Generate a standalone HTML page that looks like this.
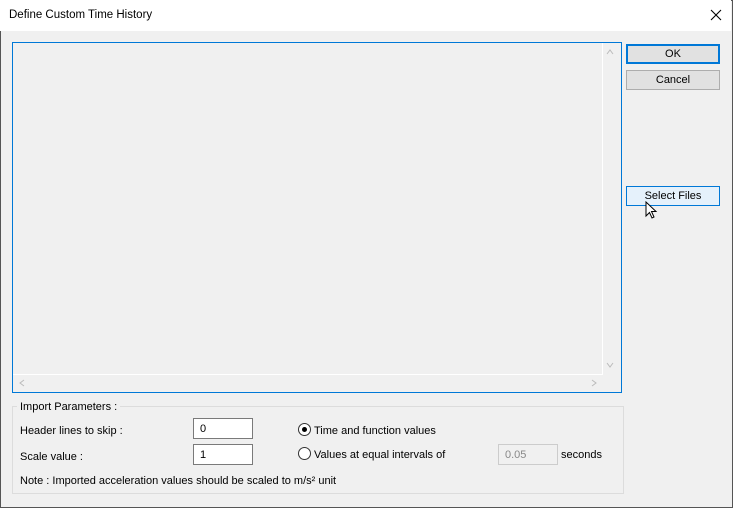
<!DOCTYPE html>
<html><head><style>
*{margin:0;padding:0;box-sizing:border-box}
body{width:733px;height:508px;background:#f0f0f0;font-family:"Liberation Sans",sans-serif;font-size:11px;color:#000;position:relative;overflow:hidden}
.win{position:absolute;left:0;top:0;width:733px;height:508px;border:1px solid #555;}
.title{position:absolute;left:0;top:0;width:731px;height:31px;background:#fff}
.a{position:absolute;white-space:nowrap}
.btn{position:absolute;left:626px;width:94px;height:20px;background:#e1e1e1;border:1px solid #adadad;text-align:center;line-height:19px}
.inp{position:absolute;width:60px;height:21px;background:#fff;border:1px solid #7a7a7a;padding-left:6px;line-height:20px}
.radio{position:absolute;width:13px;height:13px;border:1px solid #333;border-radius:50%;background:#fff}
</style></head><body>
<div class="win"></div>
<div class="title"></div>
<div class="a" style="left:9px;top:9px;font-size:11.5px">Define Custom Time History</div>
<svg class="a" style="left:710px;top:9px" width="12" height="12"><path d="M1 1L11 11M11 1L1 11" stroke="#000" stroke-width="1.1"/></svg>
<div class="a" style="left:12px;top:42px;width:610px;height:351px;border:1px solid #0078d7"></div>
<div class="a" style="left:602px;top:43px;width:1px;height:332px;background:#fff"></div>
<div class="a" style="left:13px;top:374px;width:590px;height:1px;background:#fff"></div>
<svg class="a" style="left:606px;top:49px" width="8" height="6"><path d="M1 5L4 1L7 5" stroke="#bbb" fill="none"/></svg>
<svg class="a" style="left:606px;top:362px" width="8" height="6"><path d="M1 1L4 5L7 1" stroke="#bbb" fill="none"/></svg>
<svg class="a" style="left:19px;top:379px" width="6" height="8"><path d="M5 1L1 4L5 7" stroke="#bbb" fill="none"/></svg>
<svg class="a" style="left:591px;top:379px" width="6" height="8"><path d="M1 1L5 4L1 7" stroke="#bbb" fill="none"/></svg>
<div class="btn" style="top:44px;border:2px solid #0078d7;line-height:17px">OK</div>
<div class="btn" style="top:70px">Cancel</div>
<div class="btn" style="top:186px;background:#e5f1fb;border-color:#0078d7">Select Files</div>
<svg class="a" style="left:645px;top:201px" width="14" height="20"><path d="M1 1L1 15L4.5 11.5L7 17L9 16L6.5 10.5L11 10.5Z" fill="#fff" stroke="#000" stroke-width="1"/></svg>
<div class="a" style="left:12px;top:406px;width:612px;height:88px;border:1px solid #dcdcdc"></div>
<div class="a" style="left:17px;top:401px;background:#f0f0f0;padding:0 3px">Import Parameters :</div>
<div class="a" style="left:20px;top:425px">Header lines to skip :</div>
<div class="a" style="left:20px;top:451px">Scale value :</div>
<div class="inp" style="left:193px;top:418px">0</div>
<div class="inp" style="left:193px;top:444px">1</div>
<div class="inp" style="left:498px;top:444px;border-color:#ccc;color:#888;background:#f0f0f0">0.05</div>
<div class="radio" style="left:298px;top:423px"></div>
<div class="a" style="left:302px;top:427px;width:5px;height:5px;border-radius:50%;background:#000"></div>
<div class="a" style="left:314px;top:425px">Time and function values</div>
<div class="radio" style="left:298px;top:447px"></div>
<div class="a" style="left:314px;top:449px">Values at equal intervals of</div>
<div class="a" style="left:561px;top:449px">seconds</div>
<div class="a" style="left:20px;top:475px">Note : Imported acceleration values should be scaled to m/s² unit</div>
</body></html>
